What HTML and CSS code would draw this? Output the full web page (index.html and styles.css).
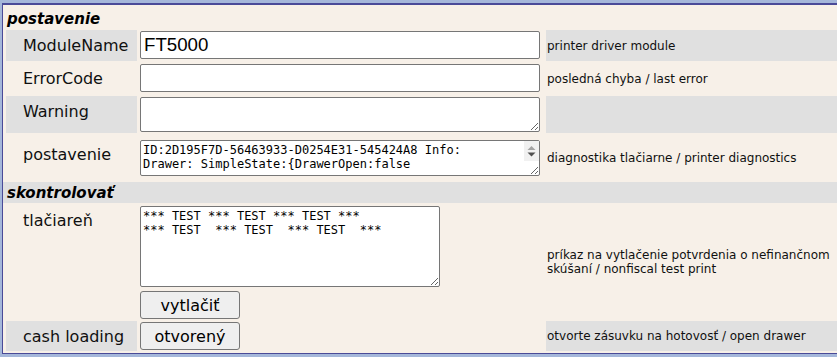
FILE: index.html
```html
<!DOCTYPE html>
<html lang="sk">
<head>
<meta charset="utf-8">
<title>postavenie</title>
<link rel="stylesheet" href="styles.css">
</head>
<body>
<div class="sheet">
  <div class="section-title first">postavenie</div>
  <div class="grid grid-status">
    <div class="label shade">ModuleName</div>
    <div class="field"><input class="text" type="text" value="FT5000"></div>
    <div class="desc shade">printer driver module</div>

    <div class="label">ErrorCode</div>
    <div class="field"><input class="text" type="text" value=""></div>
    <div class="desc">posledná chyba / last error</div>

    <div class="label shade">Warning</div>
    <div class="field"><textarea class="area area-warning"></textarea></div>
    <div class="desc shade"></div>

    <div class="label label-low">postavenie</div>
    <div class="field field-mid">
      <div class="area-wrap">
        <textarea class="area area-status">ID:2D195F7D-56463933-D0254E31-545424A8 Info:
Drawer: SimpleState:{DrawerOpen:false</textarea>
        <div class="vscroll">
          <svg class="arrow" width="15" height="16" viewBox="0 0 15 16">
            <path d="M3.5 7 L7.5 3 L11.5 7 Z" fill="#a3a3a3"/>
            <path d="M3.5 9.5 L11.5 9.5 L7.5 13.5 Z" fill="#505050"/>
          </svg>
        </div>
      </div>
    </div>
    <div class="desc">diagnostika tlačiarne / printer diagnostics</div>
  </div>
  <div class="section-title second shade">skontrolovať</div>
  <div class="grid grid-check">
    <div class="label">tlačiareň</div>
    <div class="field field-stack"><textarea class="area area-test">*** TEST *** TEST *** TEST ***
*** TEST  *** TEST  *** TEST  ***</textarea><button class="btn" type="button">vytlačiť</button></div>
    <div class="desc">príkaz na vytlačenie potvrdenia o nefinančnom skúšaní / nonfiscal test print</div>

    <div class="label shade">cash loading</div>
    <div class="field"><button class="btn" type="button">otvorený</button></div>
    <div class="desc shade">otvorte zásuvku na hotovosť / open drawer</div>
  </div>
</div>
</body>
</html>
```
FILE: styles.css
```css
html, body {
  margin: 0;
  padding: 0;
  overflow: hidden;
  background: #a5b7da;
}
body {
  width: 837px;
  height: 357px;
  font-family: "DejaVu Sans", Verdana, sans-serif;
  color: #101010;
}
.sheet {
  margin: 3px 0 0 2px;
  width: 846px;
  box-sizing: border-box;
  border-top: 2px solid #4a4a98;
  border-left: 1px solid #4a4a98;
  border-bottom: 1px solid #4a4a98;
  background: #f7f0e8;
  display: flex;
  flex-direction: column;
  gap: 2px;
  padding-bottom: 2px;
}
.shade {
  background: #e0e0e0;
}
.section-title {
  font-weight: bold;
  font-style: italic;
  font-size: 15px;
  line-height: 18px;
  padding-left: 4px;
  box-sizing: border-box;
  color: #000;
}
.section-title.first {
  height: 23px;
  padding-top: 5px;
}
.section-title.second {
  height: 21px;
  padding-top: 2px;
}
.grid {
  display: grid;
  grid-template-columns: 131px 403px 300px;
  column-gap: 3px;
  row-gap: 2px;
  padding-left: 3px;
}
.grid-status {
  grid-template-rows: 31px 31px 37px 45px;
}
.grid-check {
  grid-template-rows: 114px 30px;
}
.label {
  font-size: 16px;
  line-height: 19px;
  padding: 6px 0 0 17px;
  box-sizing: border-box;
  white-space: nowrap;
}
.label-low {
  padding-top: 10px;
}
.field {
  display: flex;
  flex-direction: column;
  align-items: flex-start;
  padding-top: 1px;
}
.field-mid {
  padding-top: 5px;
}
.field-stack {
  gap: 4px;
}
.desc {
  display: flex;
  align-items: center;
  font-size: 12px;
  line-height: 14px;
  padding-left: 1px;
}
.text {
  width: 400px;
  height: 28px;
  box-sizing: border-box;
  margin: 0;
  border: 1px solid #767676;
  border-radius: 2px;
  padding: 0 3px;
  font-family: "Liberation Sans", Arial, sans-serif;
  font-size: 18.7px;
  color: #000;
  background: #fff;
}
.area {
  display: block;
  width: 400px;
  box-sizing: border-box;
  margin: 0;
  border: 1px solid #767676;
  border-radius: 2px;
  padding: 2px;
  font-family: "DejaVu Sans Mono", monospace;
  font-size: 12px;
  line-height: 14px;
  color: #000;
  background: #fff;
}
.area-warning {
  height: 35px;
}
.area-wrap {
  position: relative;
}
.area-status {
  height: 36px;
  overflow: hidden;
  padding-right: 18px;
}
.vscroll {
  position: absolute;
  top: 1px;
  right: 1px;
  width: 15px;
  height: 20px;
  background: #f1f1f1;
}
.arrow {
  display: block;
  margin-top: 2px;
}
.area-test {
  width: 300px;
  height: 81px;
}
.btn {
  width: 100px;
  height: 28px;
  box-sizing: border-box;
  margin: 0;
  padding: 0;
  border: 1px solid #767676;
  border-radius: 3px;
  background: #efefef;
  font-family: "DejaVu Sans", Verdana, sans-serif;
  font-size: 16px;
  color: #000;
}
```
